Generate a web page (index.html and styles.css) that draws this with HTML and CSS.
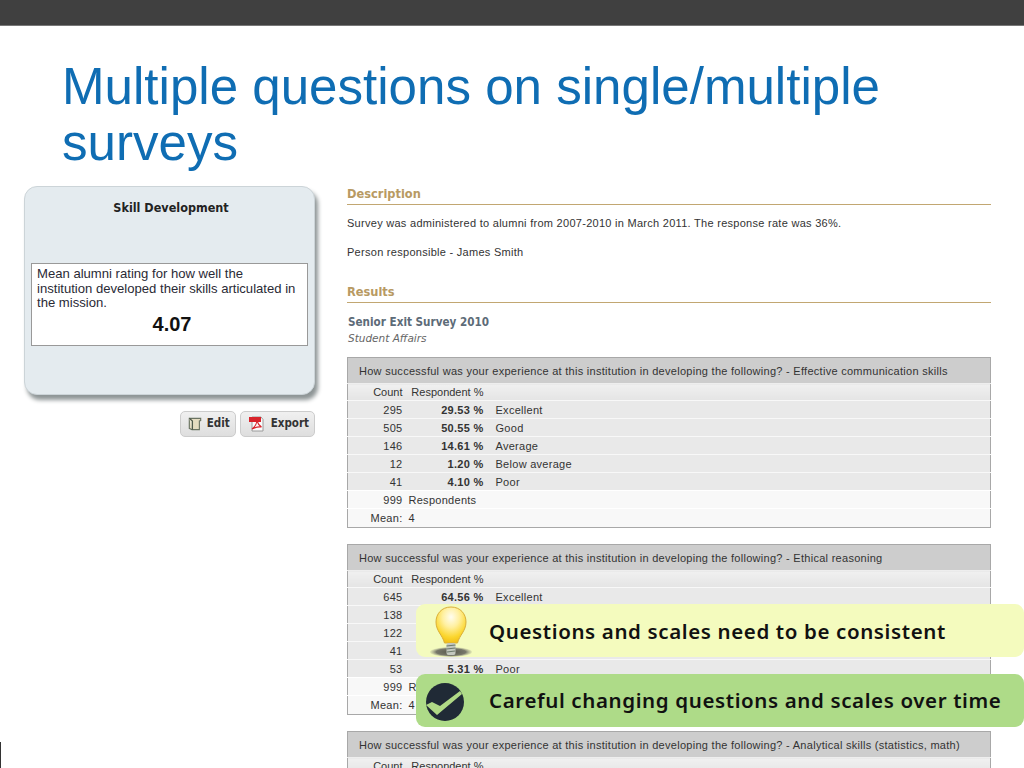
FILE: index.html
```html
<!DOCTYPE html>
<html lang="en">
<head>
<meta charset="utf-8">
<title>Multiple questions on single/multiple surveys</title>
<link rel="stylesheet" href="styles.css">
</head>
<body>
<div class="slide">
  <div class="topbar"></div>
  <h1 class="title">Multiple questions on single/multiple surveys</h1>
  <div class="columns">
    <aside class="left">
      <section class="card">
        <h2 class="card-title">Skill Development</h2>
        <div class="metric">
          <p class="metric-text">Mean alumni rating for how well the institution developed their skills articulated in the mission.</p>
          <div class="metric-value">4.07</div>
        </div>
      </section>
      <div class="actions">
        <button class="btn">
          <svg class="btn-icon" viewBox="0 0 16 16" width="14" height="14"><path d="M1.500 1.500h13v2.500L13 4.500V14.500H4.500L1.500 13z" fill="#e4dcc0" stroke="#6a7362" stroke-width="1.300"/><path d="M1.500 1.500L5 4.500v10" fill="#f1ecd8" stroke="#4f5a4b" stroke-width="1.500"/></svg>
          Edit
        </button>
        <button class="btn btn-export">
          <svg class="btn-icon" viewBox="0 0 18 18" width="18" height="18"><path d="M4 2h9l2 2.500V16H4z" fill="#fbfbfb" stroke="#9a9a9a"/><rect x="1" y="2" width="12" height="5" fill="#d8232a"/><path d="M9 6c-.6 3-2.500 6.500-5 8 3-1.500 6.500-2.500 9.500-2C11 10.500 9.800 8.500 9 6z" fill="none" stroke="#d8232a" stroke-width="1.100"/></svg>
          Export
        </button>
      </div>
    </aside>
    <main class="right">
      <h3 class="section-head">Description</h3>
      <p class="copy">Survey was administered to alumni from 2007-2010 in March 2011. The response rate was 36%.</p>
      <p class="copy copy-second">Person responsible - James Smith</p>
      <h3 class="section-head section-results">Results</h3>
      <div class="survey-name">Senior Exit Survey 2010</div>
      <div class="survey-unit">Student Affairs</div>

      <table class="result">
        <colgroup><col class="col-count"><col class="col-pct"><col></colgroup>
        <thead>
          <tr class="q"><th colspan="3">How successful was your experience at this institution in developing the following? - Effective communication skills</th></tr>
          <tr class="sub"><td class="c1">Count</td><td class="c2 plain">Respondent %</td><td class="c3"></td></tr>
        </thead>
        <tbody>
          <tr class="row"><td class="c1">295</td><td class="c2">29.53 %</td><td class="c3">Excellent</td></tr>
          <tr class="row"><td class="c1">505</td><td class="c2">50.55 %</td><td class="c3">Good</td></tr>
          <tr class="row"><td class="c1">146</td><td class="c2">14.61 %</td><td class="c3">Average</td></tr>
          <tr class="row"><td class="c1">12</td><td class="c2">1.20 %</td><td class="c3">Below average</td></tr>
          <tr class="row"><td class="c1">41</td><td class="c2">4.10 %</td><td class="c3">Poor</td></tr>
          <tr class="foot"><td class="c1">999</td><td class="left-cell" colspan="2">Respondents</td></tr>
          <tr class="foot"><td class="c1">Mean:</td><td class="left-cell" colspan="2">4</td></tr>
        </tbody>
      </table>

      <table class="result">
        <colgroup><col class="col-count"><col class="col-pct"><col></colgroup>
        <thead>
          <tr class="q"><th colspan="3">How successful was your experience at this institution in developing the following? - Ethical reasoning</th></tr>
          <tr class="sub"><td class="c1">Count</td><td class="c2 plain">Respondent %</td><td class="c3"></td></tr>
        </thead>
        <tbody>
          <tr class="row"><td class="c1">645</td><td class="c2">64.56 %</td><td class="c3">Excellent</td></tr>
          <tr class="row"><td class="c1">138</td><td class="c2"></td><td class="c3"></td></tr>
          <tr class="row"><td class="c1">122</td><td class="c2"></td><td class="c3"></td></tr>
          <tr class="row"><td class="c1">41</td><td class="c2"></td><td class="c3"></td></tr>
          <tr class="row"><td class="c1">53</td><td class="c2">5.31 %</td><td class="c3">Poor</td></tr>
          <tr class="foot"><td class="c1">999</td><td class="left-cell" colspan="2">Respondents</td></tr>
          <tr class="foot"><td class="c1">Mean:</td><td class="left-cell" colspan="2">4</td></tr>
        </tbody>
      </table>

      <table class="result">
        <colgroup><col class="col-count"><col class="col-pct"><col></colgroup>
        <thead>
          <tr class="q"><th colspan="3">How successful was your experience at this institution in developing the following? - Analytical skills (statistics, math)</th></tr>
          <tr class="sub"><td class="c1">Count</td><td class="c2 plain">Respondent %</td><td class="c3"></td></tr>
        </thead>
      </table>
    </main>
  </div>

  <div class="callout callout-tip">
    <svg class="bulb" viewBox="0 0 42 54" width="42" height="54">
      <defs>
        <radialGradient id="glass" cx="50%" cy="28%" r="70%">
          <stop offset="0" stop-color="#fffdf0"/>
          <stop offset=".4" stop-color="#fff0a0"/>
          <stop offset=".8" stop-color="#fbd62e"/>
          <stop offset="1" stop-color="#f3c21a"/>
        </radialGradient>
        <radialGradient id="shade" cx="50%" cy="50%" r="50%">
          <stop offset="0" stop-color="#55564a"/>
          <stop offset=".7" stop-color="#77786a"/>
          <stop offset="1" stop-color="#a0a28c" stop-opacity=".2"/>
        </radialGradient>
      </defs>
      <ellipse cx="21" cy="46" rx="21" ry="5" fill="url(#shade)"/>
      <path d="M21 1C11.500 1 6 8 6 16c0 9 6.500 13 8.500 21h13c2-8 8.500-12 8.500-21C36 8 30.500 1 21 1z" fill="url(#glass)" stroke="#d9ae3a" stroke-width="1"/>
      <rect x="16.500" y="37" width="9" height="12" rx="2" fill="#c3c8bf"/>
      <path d="M16.500 40l9-1M16.500 43l9-1M17 46l8-1" stroke="#6d7a6c" stroke-width="1.200"/>
    </svg>
    <span class="callout-text">Questions and scales need to be consistent</span>
  </div>
  <div class="callout callout-check">
    <svg class="check" viewBox="0 0 40 40" width="40" height="40">
      <circle cx="20" cy="20" r="19" fill="#202a36"/>
      <path d="M1 23l6-3 8 4L35 9l2 3-25 21z" fill="#b0d986"/>
    </svg>
    <span class="callout-text">Careful changing questions and scales over time</span>
  </div>
  <div class="edge-mark"></div>
</div>
</body>
</html>
```
FILE: styles.css
```css
* { box-sizing: border-box; }
html, body { margin: 0; padding: 0; background: #fff; }
.slide {
  position: relative;
  width: 1024px;
  height: 768px;
  overflow: hidden;
  font-family: "Liberation Sans", Arial, sans-serif;
  color: #222;
}
.topbar {
  height: 26px;
  background: #404040;
  border-bottom: 1px solid #777;
}
.title {
  margin: 33px 0 0 62px;
  width: 900px;
  font-size: 51.1px;
  line-height: 56px;
  font-weight: 400;
  color: #0f6db3;
}
.columns {
  display: flex;
  gap: 32px;
  padding: 15px 0 0 24px;
}
.left { width: 291px; flex: none; }
.card {
  height: 209px;
  background: #e4ebef;
  border: 1px solid #ccd4d8;
  border-radius: 13px;
  padding: 12px 6px 0;
  box-shadow: 3px 5px 4px #8e9596;
}
.card-title {
  margin: 0 0 0 3px;
  text-align: center;
  font: bold 12.5px/18px "DejaVu Sans", sans-serif;
  font-stretch: condensed;
  color: #222;
}
.metric {
  margin-top: 46px;
  height: 83px;
  background: #fff;
  border: 1px solid #999;
  padding: 3px 5px;
}
.metric-text {
  margin: 0;
  padding-right: 4px;
  font-size: 13.1px;
  line-height: 14.5px;
  color: #2a2a35;
}
.metric-value {
  text-align: center;
  padding: 1px 0 0 5px;
  font-size: 20px;
  font-weight: bold;
  line-height: 24px;
  color: #111;
}
.actions {
  display: flex;
  justify-content: flex-end;
  gap: 4px;
  margin-top: 16px;
}
.btn {
  display: flex;
  align-items: center;
  height: 26px;
  padding: 0 5px 0 7px;
  gap: 5px;
  background: linear-gradient(#f0f0f0, #dedede);
  border: 1px solid #ccc;
  border-radius: 5px;
  font: bold 11.5px/1 "DejaVu Sans", sans-serif;
  font-stretch: condensed;
  color: #333;
}
.btn-icon { flex: none; }
.right { width: 644px; flex: none; }
.section-head {
  margin: 0;
  height: 19px;
  font: bold 12.7px/16px "DejaVu Sans", sans-serif;
  font-stretch: condensed;
  color: #b89a63;
  border-bottom: 1px solid #c2a772;
}
.copy {
  margin: 11px 0 0;
  font-size: 11px;
  line-height: 14px;
  letter-spacing: .28px;
  color: #333;
}
.copy-second { margin-top: 15px; }
.section-results { margin-top: 25px; }
.survey-name {
  margin: 11px 0 0 1px;
  font: bold 11.6px/16px "DejaVu Sans", sans-serif;
  font-stretch: condensed;
  color: #5d6b78;
}
.survey-unit {
  margin: 1px 0 0 1px;
  font: italic 10.5px/14px "DejaVu Sans", sans-serif;
  color: #666;
}
.result {
  width: 644px;
  table-layout: fixed;
  border-collapse: collapse;
  border: 1px solid #a8a8a8;
  margin: 0 0 16px;
  font-size: 11px;
  letter-spacing: .28px;
  color: #333;
}
.survey-unit + .result { margin-top: 12px; }
.col-count { width: 55px; }
.col-pct { width: 81px; }
.result td, .result th { padding: 0; height: 18px; white-space: nowrap; }
.q th {
  height: 26px;
  background: #cdcdcd;
  font-weight: normal;
  text-align: left;
  padding-left: 11px;
  border-bottom: 1px solid #eee;
}
.result .sub td {
  background: linear-gradient(#f0f0f0, #e4e4e4);
  height: 17px;
  letter-spacing: 0;
}
.row td { background: #e9e9e9; border-top: 1px solid #f8f8f8; }
.foot td { background: #f8f8f8; border-top: 1px solid #fff; }
.result .foot:last-child td { height: 19px; }
.c1 { text-align: right; }
.c2 { text-align: right; font-weight: bold; }
.c2.plain { font-weight: normal; }
.c3 { padding-left: 12px !important; }
.left-cell { padding-left: 6px !important; }
.callout {
  position: absolute;
  left: 416px;
  right: 0;
  height: 53px;
  display: flex;
  align-items: center;
  padding-left: 73px;
  border-radius: 9px;
  font: 600 20.5px/1 "Noto Sans", sans-serif;
  color: #111;
  letter-spacing: .62px;
}
.callout-tip .callout-text { position: relative; top: 1px; }
.callout-tip { top: 604px; background: #f4fbbe; }
.callout-check { top: 674px; background: #aedb88; }
.bulb { position: absolute; left: 14px; top: 2px; }
.check { position: absolute; left: 9px; top: 8px; }
.edge-mark {
  position: absolute;
  left: 0;
  top: 742px;
  width: 1px;
  height: 26px;
  background: #333;
}
```
